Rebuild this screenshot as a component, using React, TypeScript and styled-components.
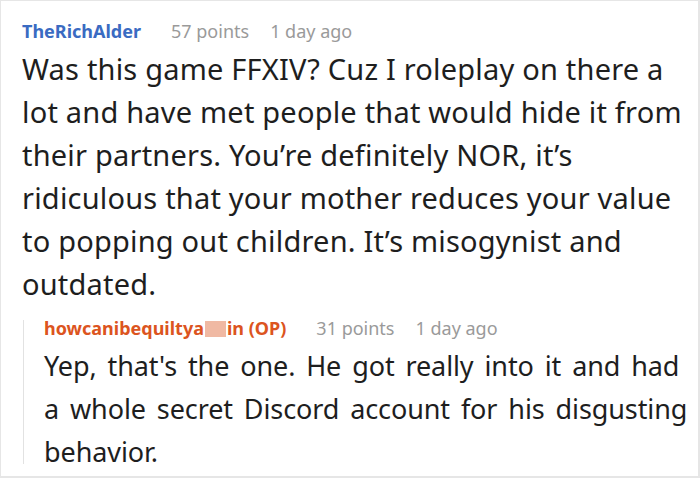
import React from "react";
import styled, { createGlobalStyle } from "styled-components";

const Global = createGlobalStyle`
  html, body { margin: 0; padding: 0; background: #fff; }
  body { font-family: "Noto Sans", "Open Sans", sans-serif; }
`;

const Frame = styled.div`
  box-sizing: border-box;
  width: 700px;
  height: 478px;
  border: 1px solid #e6e6e6;
  border-right-width: 2px;
  border-bottom-width: 2px;
  padding: 14px 0 0 21px;
  overflow: hidden;
`;

const Meta = styled.div<{ $reply?: boolean }>`
  display: flex;
  align-items: baseline;
  font-size: 18px;
  line-height: ${(p) => (p.$reply ? "24px" : "32px")};
  margin-top: ${(p) => (p.$reply ? "-6px" : "0")};
  gap: 21px;
`;

const Author = styled.span<{ $op?: boolean }>`
  font-weight: 700;
  color: ${(p) => (p.$op ? "#dc5420" : "#3a6bc2")};
  margin-right: 9px;
`;

const Stat = styled.span`
  color: #9a9a9a;
`;

const Redacted = styled.span`
  display: inline-block;
  width: 21px;
  height: 16px;
  margin: 0 1px;
  background: #f0b9a3;
  vertical-align: -2px;
`;

const Body = styled.p<{ $reply?: boolean }>`
  margin: ${(p) => (p.$reply ? "4px 0 0" : "0")};
  font-size: ${(p) => (p.$reply ? "27px" : "29px")};
  letter-spacing: ${(p) => (p.$reply ? "-0.1px" : "0.2px")};
  word-spacing: ${(p) => (p.$reply ? "4px" : "0")};
  line-height: 43px;
  color: #1e1e1e;
`;

const Reply = styled.div`
  position: relative;
  margin-top: 17px;
  padding: 0 4px 0 22px;

  /* thread guide line */
  &::before {
    content: "";
    position: absolute;
    left: 1px;
    top: 4px;
    bottom: 9px;
    width: 1px;
    background: #e2e2e2;
  }
`;

export default function App() {
  return (
    <>
      <Global />
      <Frame>
        <Meta>
          <Author>TheRichAlder</Author>
          <Stat>57 points</Stat>
          <Stat>1 day ago</Stat>
        </Meta>
        <Body>
          Was this game FFXIV? Cuz I roleplay on there a lot and have met people that would hide it from their partners. You’re definitely NOR, it’s ridiculous that your mother reduces your value to popping out children. It’s misogynist and outdated.
        </Body>
        <Reply>
          <Meta $reply>
            <Author $op>
              howcanibequiltya<Redacted />in (OP)
            </Author>
            <Stat>31 points</Stat>
            <Stat>1 day ago</Stat>
          </Meta>
          <Body $reply>
            Yep, that's the one. He got really into it and had a whole secret Discord account for his disgusting behavior.
          </Body>
        </Reply>
      </Frame>
    </>
  );
}
